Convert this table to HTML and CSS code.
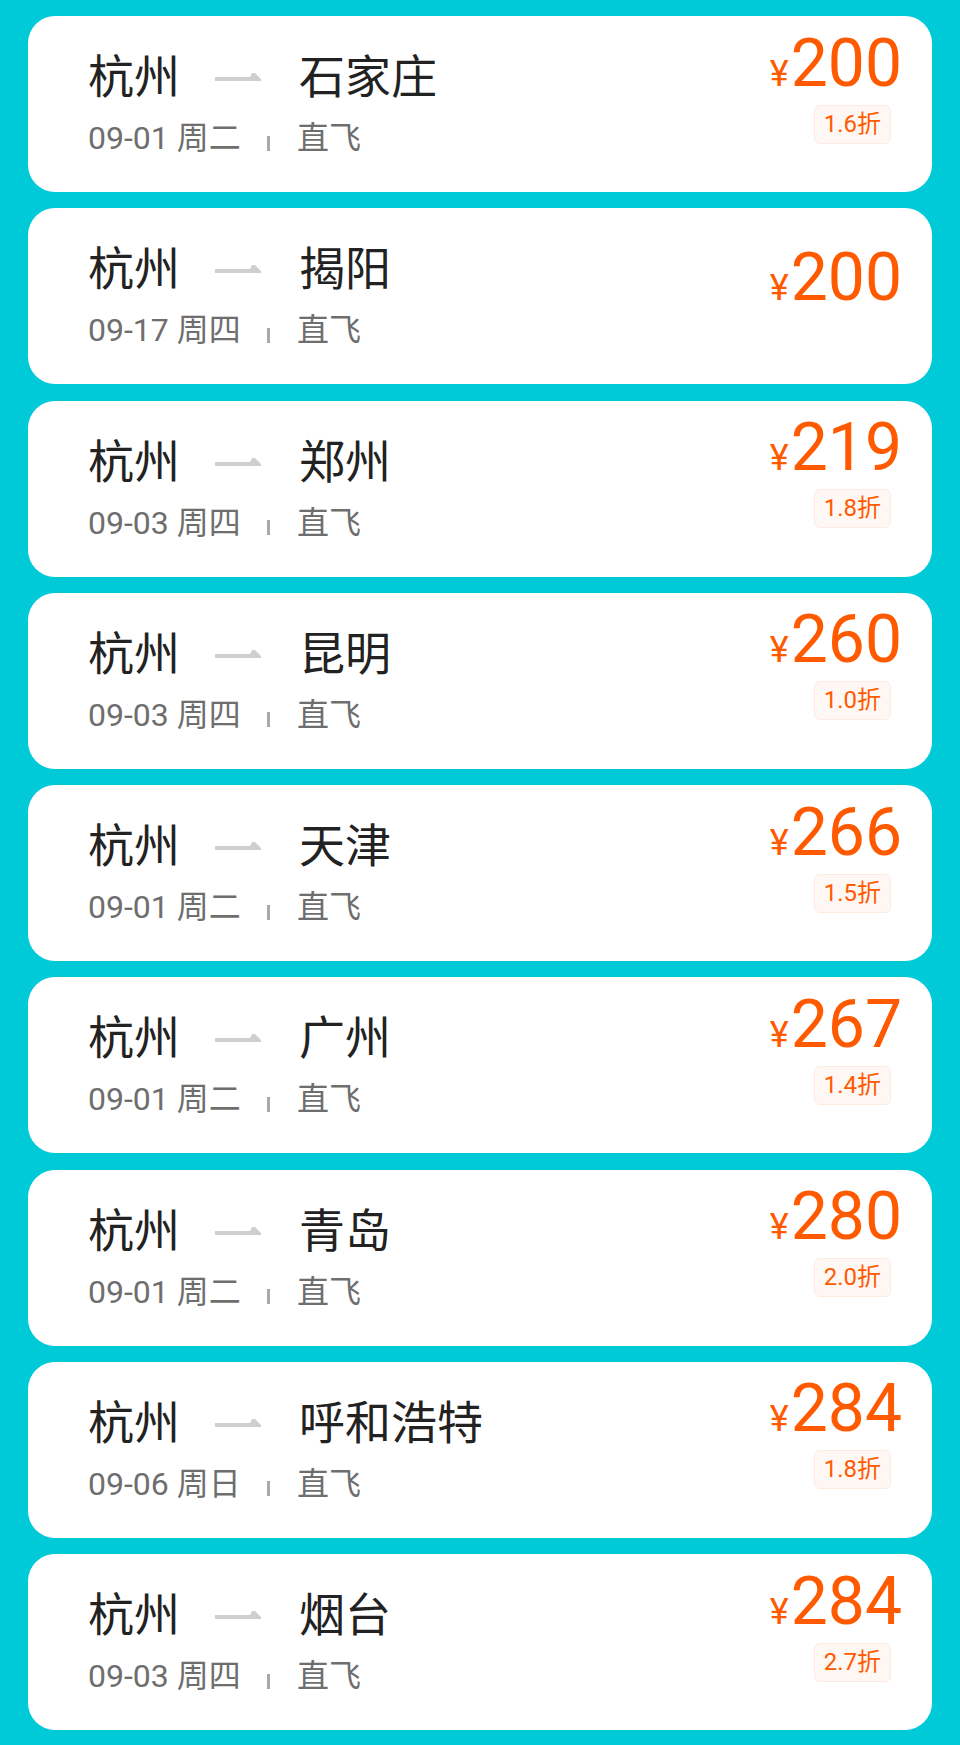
FILE: index.html
```html
<!DOCTYPE html>
<html>
<head>
    <title>特价机票</title>
    <meta charset="UTF-8">
    <meta name="viewport" content="width=device-width, initial-scale=1.0">
    <link rel="stylesheet" href="styles.css">
</head>
<body>
    <div class="list">
        <div class="card">
            <div class="route">
                <div class="cities">
                    <span class="from">杭州</span>
                    <svg class="arrow" viewBox="0 0 46 10"><polygon points="0,5 35,5 37,1 40,1 46,7 46,9 0,9"/></svg>
                    <span class="to">石家庄</span>
                </div>
                <div class="meta">
                    <span class="date">09-01 周二</span>
                    <span class="sep"></span>
                    <span class="type">直飞</span>
                </div>
            </div>
            <div class="fare">
                <div class="price"><span class="yen">¥</span>200</div>
                <div class="discount">1.6折</div>
            </div>
        </div>

        <div class="card">
            <div class="route">
                <div class="cities">
                    <span class="from">杭州</span>
                    <svg class="arrow" viewBox="0 0 46 10"><polygon points="0,5 35,5 37,1 40,1 46,7 46,9 0,9"/></svg>
                    <span class="to">揭阳</span>
                </div>
                <div class="meta">
                    <span class="date">09-17 周四</span>
                    <span class="sep"></span>
                    <span class="type">直飞</span>
                </div>
            </div>
            <div class="fare">
                <div class="price"><span class="yen">¥</span>200</div>
            </div>
        </div>

        <div class="card">
            <div class="route">
                <div class="cities">
                    <span class="from">杭州</span>
                    <svg class="arrow" viewBox="0 0 46 10"><polygon points="0,5 35,5 37,1 40,1 46,7 46,9 0,9"/></svg>
                    <span class="to">郑州</span>
                </div>
                <div class="meta">
                    <span class="date">09-03 周四</span>
                    <span class="sep"></span>
                    <span class="type">直飞</span>
                </div>
            </div>
            <div class="fare">
                <div class="price"><span class="yen">¥</span>219</div>
                <div class="discount">1.8折</div>
            </div>
        </div>

        <div class="card">
            <div class="route">
                <div class="cities">
                    <span class="from">杭州</span>
                    <svg class="arrow" viewBox="0 0 46 10"><polygon points="0,5 35,5 37,1 40,1 46,7 46,9 0,9"/></svg>
                    <span class="to">昆明</span>
                </div>
                <div class="meta">
                    <span class="date">09-03 周四</span>
                    <span class="sep"></span>
                    <span class="type">直飞</span>
                </div>
            </div>
            <div class="fare">
                <div class="price"><span class="yen">¥</span>260</div>
                <div class="discount">1.0折</div>
            </div>
        </div>

        <div class="card">
            <div class="route">
                <div class="cities">
                    <span class="from">杭州</span>
                    <svg class="arrow" viewBox="0 0 46 10"><polygon points="0,5 35,5 37,1 40,1 46,7 46,9 0,9"/></svg>
                    <span class="to">天津</span>
                </div>
                <div class="meta">
                    <span class="date">09-01 周二</span>
                    <span class="sep"></span>
                    <span class="type">直飞</span>
                </div>
            </div>
            <div class="fare">
                <div class="price"><span class="yen">¥</span>266</div>
                <div class="discount">1.5折</div>
            </div>
        </div>

        <div class="card">
            <div class="route">
                <div class="cities">
                    <span class="from">杭州</span>
                    <svg class="arrow" viewBox="0 0 46 10"><polygon points="0,5 35,5 37,1 40,1 46,7 46,9 0,9"/></svg>
                    <span class="to">广州</span>
                </div>
                <div class="meta">
                    <span class="date">09-01 周二</span>
                    <span class="sep"></span>
                    <span class="type">直飞</span>
                </div>
            </div>
            <div class="fare">
                <div class="price"><span class="yen">¥</span>267</div>
                <div class="discount">1.4折</div>
            </div>
        </div>

        <div class="card">
            <div class="route">
                <div class="cities">
                    <span class="from">杭州</span>
                    <svg class="arrow" viewBox="0 0 46 10"><polygon points="0,5 35,5 37,1 40,1 46,7 46,9 0,9"/></svg>
                    <span class="to">青岛</span>
                </div>
                <div class="meta">
                    <span class="date">09-01 周二</span>
                    <span class="sep"></span>
                    <span class="type">直飞</span>
                </div>
            </div>
            <div class="fare">
                <div class="price"><span class="yen">¥</span>280</div>
                <div class="discount">2.0折</div>
            </div>
        </div>

        <div class="card">
            <div class="route">
                <div class="cities">
                    <span class="from">杭州</span>
                    <svg class="arrow" viewBox="0 0 46 10"><polygon points="0,5 35,5 37,1 40,1 46,7 46,9 0,9"/></svg>
                    <span class="to">呼和浩特</span>
                </div>
                <div class="meta">
                    <span class="date">09-06 周日</span>
                    <span class="sep"></span>
                    <span class="type">直飞</span>
                </div>
            </div>
            <div class="fare">
                <div class="price"><span class="yen">¥</span>284</div>
                <div class="discount">1.8折</div>
            </div>
        </div>

        <div class="card">
            <div class="route">
                <div class="cities">
                    <span class="from">杭州</span>
                    <svg class="arrow" viewBox="0 0 46 10"><polygon points="0,5 35,5 37,1 40,1 46,7 46,9 0,9"/></svg>
                    <span class="to">烟台</span>
                </div>
                <div class="meta">
                    <span class="date">09-03 周四</span>
                    <span class="sep"></span>
                    <span class="type">直飞</span>
                </div>
            </div>
            <div class="fare">
                <div class="price"><span class="yen">¥</span>284</div>
                <div class="discount">2.7折</div>
            </div>
        </div>
    </div>
</body>
</html>
```

FILE: styles.css
```css
body {
    margin: 0;
    background: #00c9d8;
    font-family: "Noto Sans CJK SC", sans-serif;
}
.list {
    display: flex;
    flex-direction: column;
    gap: 16.25px;
    padding: 16px 28px;
}
.card {
    display: flex;
    align-items: center;
    justify-content: space-between;
    height: 176px;
    padding: 0 30px 0 60px;
    background: white;
    border-radius: 27px;
    box-sizing: border-box;
}
.route {
    display: flex;
    flex-direction: column;
    padding-bottom: 5px;
}
.cities {
    display: flex;
    align-items: center;
    height: 56px;
    font-size: 46px;
    line-height: 56px;
    color: #222;
}
.from {
    width: 127px;
}
.arrow {
    width: 46px;
    height: 10px;
    margin: 8px 38px 0 0;
    fill: #cfcfcf;
}
.meta {
    display: flex;
    align-items: center;
    margin-top: 17px;
    font-family: Roboto, "Noto Sans CJK SC", sans-serif;
    font-size: 32px;
    line-height: 40px;
    color: #6e6e6e;
}
.date {
    width: 179px;
}
.sep {
    flex: none;
    width: 3px;
    height: 15px;
    margin: 10px 27px 0 0;
    background: #a8a8a8;
}
.fare {
    display: flex;
    flex-direction: column;
    align-items: flex-end;
}
.price {
    margin-top: -26px;
    font-family: Roboto, sans-serif;
    font-size: 66px;
    line-height: 50px;
    color: #ff5a00;
}
.yen {
    font-size: 36px;
    margin-right: 2px;
}
.discount {
    margin: 6px 11px 0 0;
    padding: 0 9px;
    height: 39px;
    line-height: 37px;
    font-family: Roboto, "Noto Sans CJK SC", sans-serif;
    font-size: 24px;
    color: #ff5a00;
    background: #fff7f3;
    border: 1px solid #fdebe2;
    border-radius: 6px;
    box-sizing: border-box;
}
```
